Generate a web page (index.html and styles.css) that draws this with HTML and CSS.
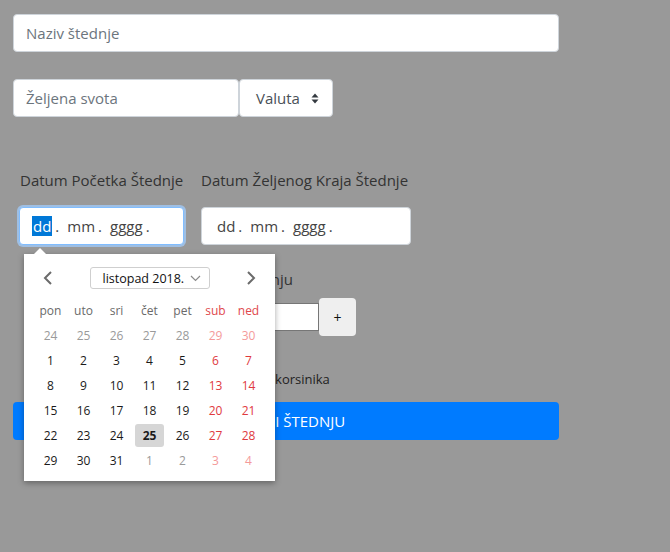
FILE: index.html
```html
<!DOCTYPE html>
<html lang="hr">
<head>
<meta charset="utf-8">
<title>Nova štednja</title>
<link rel="stylesheet" href="styles.css">
</head>
<body>
<div class="page">
  <input class="control name" type="text" placeholder="Naziv štednje">

  <div class="amount-row">
    <input class="control amount" type="text" placeholder="Željena svota">
    <div class="control select">
      <span>Valuta</span>
      <svg class="updown" width="8" height="11" viewBox="0 0 8 11"><path d="M4 0.5 L7.5 4.5 H0.5 Z M4 10.5 L7.5 6.5 H0.5 Z" fill="#343a40"/></svg>
    </div>
  </div>

  <div class="dates">
    <div class="date-col col-start">
      <div class="label">Datum Početka Štednje</div>
      <div class="control date focused"><span class="sel">dd</span><span class="sep">.</span><span class="seg">mm</span><span class="sep">.</span><span class="seg">gggg</span><span class="sep">.</span></div>
    </div>
    <div class="date-col col-end">
      <div class="label">Datum Željenog Kraja Štednje</div>
      <div class="control date"><span class="seg first">dd</span><span class="sep">.</span><span class="seg">mm</span><span class="sep">.</span><span class="seg">gggg</span><span class="sep">.</span></div>
    </div>

    <div class="calendar">
      <div class="notch"></div>
      <div class="cal-head">
        <svg class="nav" width="12" height="16" viewBox="0 0 12 16"><path d="M9 2 L3 8 L9 14" fill="none" stroke="#6b6b6b" stroke-width="2"/></svg>
        <div class="month">
          <span>listopad 2018.</span>
          <svg width="11" height="7" viewBox="0 0 11 7"><path d="M1 1 L5.5 5.5 L10 1" fill="none" stroke="#8a8a8a" stroke-width="1.2"/></svg>
        </div>
        <svg class="nav" width="12" height="16" viewBox="0 0 12 16"><path d="M3 2 L9 8 L3 14" fill="none" stroke="#6b6b6b" stroke-width="2"/></svg>
      </div>
      <div class="grid">
        <span class="dn">pon</span><span class="dn">uto</span><span class="dn">sri</span><span class="dn">čet</span><span class="dn">pet</span><span class="dn we">sub</span><span class="dn we">ned</span>
        <span class="d out">24</span><span class="d out">25</span><span class="d out">26</span><span class="d out">27</span><span class="d out">28</span><span class="d out we">29</span><span class="d out we">30</span>
        <span class="d">1</span><span class="d">2</span><span class="d">3</span><span class="d">4</span><span class="d">5</span><span class="d we">6</span><span class="d we">7</span>
        <span class="d">8</span><span class="d">9</span><span class="d">10</span><span class="d">11</span><span class="d">12</span><span class="d we">13</span><span class="d we">14</span>
        <span class="d">15</span><span class="d">16</span><span class="d">17</span><span class="d">18</span><span class="d">19</span><span class="d we">20</span><span class="d we">21</span>
        <span class="d">22</span><span class="d">23</span><span class="d">24</span><span class="d today"><b>25</b></span><span class="d">26</span><span class="d we">27</span><span class="d we">28</span>
        <span class="d">29</span><span class="d">30</span><span class="d">31</span><span class="d out">1</span><span class="d out">2</span><span class="d out we">3</span><span class="d out we">4</span>
      </div>
    </div>
  </div>

  <div class="label users-label">Dodajte prijatelje u zajedničku štednju</div>
  <div class="users-row">
    <input class="plain" type="text">
    <button class="plus" type="button">+</button>
  </div>

  <div class="note">U ovu štednju još nije dodan niti jedan korsinika</div>

  <button class="primary" type="button">SPREMI ŠTEDNJU</button>
</div>
</body>
</html>
```

FILE: styles.css
```css
html, body {
  margin: 0;
  padding: 0;
}
body {
  background: #999999;
  font-family: "Open Sans", "Noto Sans", "Liberation Sans", sans-serif;
  font-size: 16px;
  color: #212529;
  height: 552px;
  overflow: hidden;
}
.page {
  padding: 14px 0 0 13px;
  width: 546px;
}
.control {
  box-sizing: border-box;
  height: 38px;
  border: 1px solid #ced4da;
  border-radius: 4px;
  background: #fff;
  font-family: inherit;
  font-size: 15px;
  color: #495057;
  padding: 0 12px;
  outline: none;
}
.control::placeholder {
  color: #6c757d;
  opacity: 1;
}
.name {
  display: block;
  width: 546px;
}
.amount-row {
  display: flex;
  margin-top: 27px;
}
.amount {
  width: 226px;
}
.select {
  width: 94px;
  display: flex;
  align-items: center;
  justify-content: space-between;
  padding: 0 13px 0 16px;
  color: #495057;
}
.dates {
  position: relative;
  display: flex;
  gap: 17px;
  margin-top: 51px;
  margin-left: 6px;
}
.date-col {
  display: flex;
  flex-direction: column;
  gap: 15px;
}
.col-start { width: 165px; }
.col-end { width: 210px; }
.label {
  font-size: 15px;
  line-height: 24px;
  color: #333;
  white-space: nowrap;
  padding-left: 1px;
}
.col-end .label { padding-left: 0; }
.date {
  display: flex;
  align-items: center;
  padding: 0 0 0 12px;
  color: #444;
  font-size: 15px;
}
.date.focused {
  border-color: #80bdff;
  box-shadow: 0 0 0 2px rgba(160, 195, 235, 0.9);
}
.sel {
  background: #0078d7;
  color: #fff;
  line-height: 20px;
  padding: 0 1px;
}
.first { padding-left: 3px; }
.sep { margin: 0 8px 0 3px; }
.calendar {
  position: absolute;
  left: 5px;
  top: 86px;
  width: 251px;
  height: 227px;
  box-sizing: border-box;
  background: #fff;
  box-shadow: 0 2px 6px rgba(0, 0, 0, 0.35);
  padding: 13px 10px 8px;
  font-size: 12px;
  z-index: 2;
}
.notch {
  position: absolute;
  top: -6px;
  left: 9px;
  width: 0;
  height: 0;
  border-left: 7px solid transparent;
  border-right: 7px solid transparent;
  border-bottom: 7px solid #fff;
}
.cal-head {
  display: flex;
  align-items: center;
  justify-content: space-between;
  height: 22px;
  padding: 0 8px 0 8px;
  margin-bottom: 9px;
}
.month {
  box-sizing: border-box;
  width: 120px;
  height: 22px;
  border: 1px solid #cfcfcf;
  border-radius: 3px;
  display: flex;
  align-items: center;
  justify-content: space-between;
  padding: 0 8px 0 12px;
  color: #111;
  font-size: 12.5px;
}
.grid {
  display: grid;
  grid-template-columns: repeat(7, 33px);
  grid-auto-rows: 25px;
}
.grid span {
  display: flex;
  align-items: center;
  justify-content: center;
}
.dn { color: #6a6a6a; }
.dn.we { color: #e0474c; }
.d { color: #1a1a1a; }
.d.we { color: #e0393e; }
.d.out { color: #9a9a9a; }
.d.out.we { color: #f49a9a; }
.grid .today {
  background: #d6d6d6;
  border-radius: 3px;
  margin: 1px 2px;
}
.today b { font-weight: 700; }
.users-label {
  margin-top: 22px;
  margin-left: 12px;
}
.users-row {
  display: flex;
  align-items: center;
  margin-top: 7px;
  margin-left: 12px;
}
.plain {
  box-sizing: border-box;
  width: 294px;
  height: 28px;
  border: 1px solid #767676;
  background: #fff;
  margin: 0;
}
.plus {
  box-sizing: border-box;
  width: 37px;
  height: 38px;
  border: none;
  border-radius: 4px;
  background: #efefef;
  font-size: 14px;
  color: #111;
  font-family: inherit;
}
.note {
  margin-top: 33px;
  margin-left: 27px;
  font-size: 13px;
  line-height: 20px;
  color: #222;
}
.primary {
  display: block;
  width: 546px;
  height: 38px;
  margin-top: 13px;
  border: none;
  border-radius: 4px;
  background: #007bff;
  color: #fff;
  font-family: inherit;
  font-size: 15px;
}
```
